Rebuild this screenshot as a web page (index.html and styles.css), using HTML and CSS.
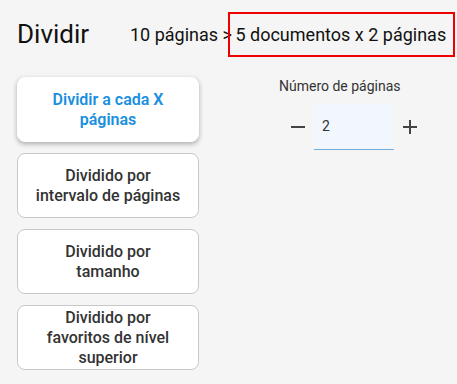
FILE: index.html
```html
<!Doctype html>
<html>
	<head>
		<title>Dividir</title>
		<link rel="stylesheet" href="styles.css">
	</head>
	<body>
		<div class="header">
			<h1 class="title">Dividir</h1>
			<div class="summary">10 páginas &gt; <span class="mark">5 documentos x 2 páginas</span></div>
		</div>
		<div class="main">
			<div class="modes">
				<button class="mode active">Dividir a cada X páginas</button>
				<button class="mode">Dividido por intervalo de páginas</button>
				<button class="mode">Dividido por tamanho</button>
				<button class="mode">Dividido por favoritos de nível superior</button>
			</div>
			<div class="options">
				<div class="label">Número de páginas</div>
				<div class="stepper">
					<button class="step">
						<svg width="16" height="16" viewBox="0 0 16 16"><path d="M1 8h14" stroke="#444" stroke-width="2"/></svg>
					</button>
					<div class="field">2</div>
					<button class="step">
						<svg width="16" height="16" viewBox="0 0 16 16"><path d="M1 8h14M8 1v14" stroke="#444" stroke-width="2"/></svg>
					</button>
				</div>
			</div>
		</div>
	</body>
</html>
```
FILE: styles.css
```css
body
{
	margin : 0;
	background-color : #f5f5f5;
	font-family : Roboto, "Liberation Sans", sans-serif;
	color : #222;
}
.header
{
	display : flex;
	align-items : center;
	height : 68px;
	padding-left : 17px;
}
.title
{
	margin : 0;
	font-size : 26px;
	font-weight : 400;
	color : #111;
	width : 113px;
}
.summary
{
	font-size : 18px;
	color : #111;
	white-space : nowrap;
}
.mark
{
	border : 2px solid #ee0000;
	padding : 10px 7px 10px 5px;
	margin-left : -8px;
}
.main
{
	display : flex;
	padding-left : 17px;
	padding-top : 9px;
}
.modes
{
	display : flex;
	flex-direction : column;
	gap : 11px;
	width : 182px;
}
.mode
{
	height : 65px;
	background-color : #fff;
	border : 1px solid #c8c8c8;
	border-radius : 8px;
	font-family : inherit;
	font-size : 16px;
	font-weight : 500;
	line-height : 20px;
	color : #333;
	padding : 0 16px;
}
.mode.active
{
	border-color : #fff;
	color : #1a8fe0;
	font-weight : 600;
	box-shadow : 0 2px 5px rgba(0, 0, 0, 0.3);
}
.options
{
	display : flex;
	flex-direction : column;
	padding-left : 80px;
	padding-top : 1px;
}
.label
{
	font-size : 14px;
	color : #333;
}
.stepper
{
	display : flex;
	align-items : center;
	margin-top : 10px;
	margin-left : 3px;
}
.step
{
	background : none;
	border : none;
	padding : 0 8px;
	height : 46px;
	display : flex;
	align-items : center;
}
.field
{
	width : 72px;
	height : 45px;
	line-height : 45px;
	padding-left : 8px;
	background-color : #f1f7fc;
	border-bottom : 1px solid #74acdc;
	font-size : 14px;
	color : #333;
}
```
